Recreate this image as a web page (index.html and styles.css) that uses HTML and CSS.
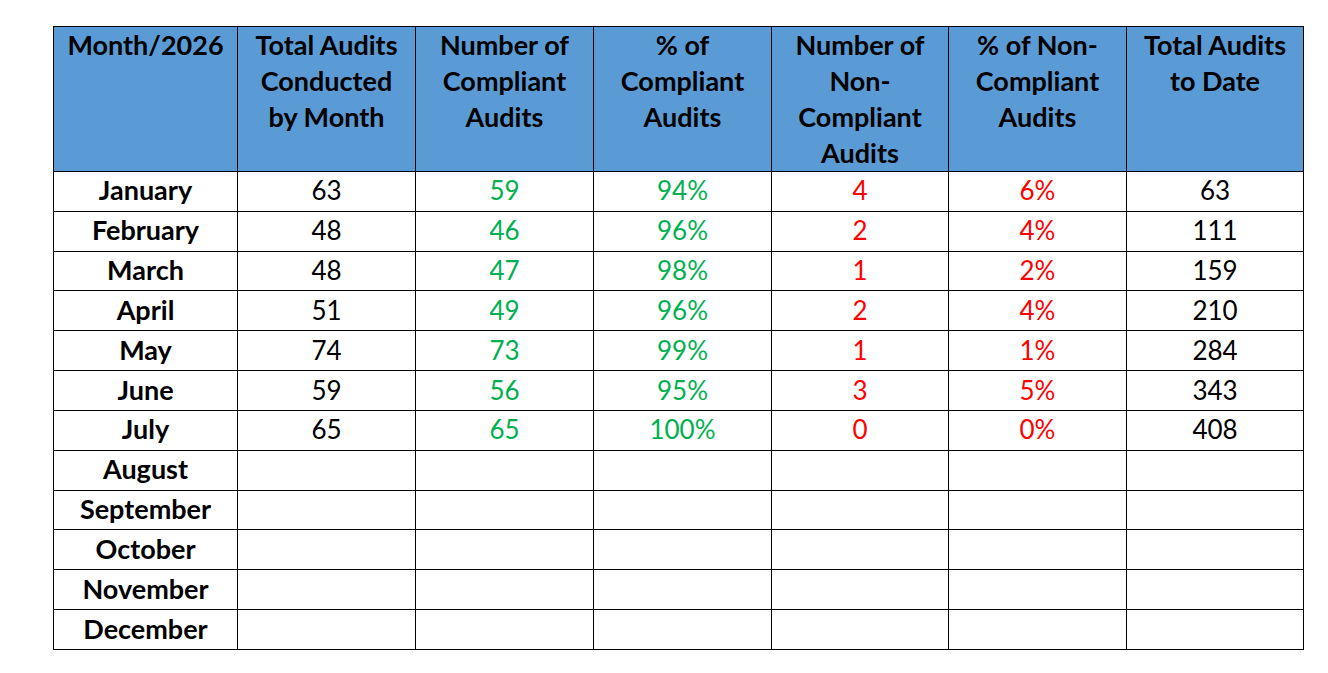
FILE: index.html
```html
<!DOCTYPE html>
<html lang="en">
<head>
<meta charset="utf-8">
<title>Audits 2026</title>
<link rel="stylesheet" href="styles.css">
</head>
<body>
<table class="audits">
  <colgroup>
    <col class="c-month"><col class="c-std"><col class="c-std"><col class="c-std"><col class="c-std5"><col class="c-std"><col class="c-std5">
  </colgroup>
  <thead>
    <tr>
      <th>Month/2026</th>
      <th>Total Audits Conducted by Month</th>
      <th>Number of Compliant Audits</th>
      <th>% of Compliant Audits</th>
      <th>Number of Non-Compliant Audits</th>
      <th>% of Non-Compliant Audits</th>
      <th>Total Audits to Date</th>
    </tr>
  </thead>
  <tbody>
    <tr><th>January</th><td>63</td><td class="ok">59</td><td class="ok">94%</td><td class="bad">4</td><td class="bad">6%</td><td>63</td></tr>
    <tr><th>February</th><td>48</td><td class="ok">46</td><td class="ok">96%</td><td class="bad">2</td><td class="bad">4%</td><td>111</td></tr>
    <tr><th>March</th><td>48</td><td class="ok">47</td><td class="ok">98%</td><td class="bad">1</td><td class="bad">2%</td><td>159</td></tr>
    <tr><th>April</th><td>51</td><td class="ok">49</td><td class="ok">96%</td><td class="bad">2</td><td class="bad">4%</td><td>210</td></tr>
    <tr><th>May</th><td>74</td><td class="ok">73</td><td class="ok">99%</td><td class="bad">1</td><td class="bad">1%</td><td>284</td></tr>
    <tr><th>June</th><td>59</td><td class="ok">56</td><td class="ok">95%</td><td class="bad">3</td><td class="bad">5%</td><td>343</td></tr>
    <tr><th>July</th><td>65</td><td class="ok">65</td><td class="ok">100%</td><td class="bad">0</td><td class="bad">0%</td><td>408</td></tr>
    <tr><th>August</th><td></td><td></td><td></td><td></td><td></td><td></td></tr>
    <tr><th>September</th><td></td><td></td><td></td><td></td><td></td><td></td></tr>
    <tr><th>October</th><td></td><td></td><td></td><td></td><td></td><td></td></tr>
    <tr><th>November</th><td></td><td></td><td></td><td></td><td></td><td></td></tr>
    <tr><th>December</th><td></td><td></td><td></td><td></td><td></td><td></td></tr>
  </tbody>
</table>
</body>
</html>
```

FILE: styles.css
```css
html, body {
  margin: 0;
  padding: 0;
  background: #ffffff;
}

body {
  font-family: "Lato", "Open Sans", "Liberation Sans", sans-serif;
  color: #000000;
}

.audits {
  margin: 26px 0 0 53px;
  border-collapse: collapse;
  table-layout: fixed;
  width: 1250px;
}

.c-month { width: 184px; }
.c-std { width: 178px; }
.c-std5 { width: 177px; }

.audits th,
.audits td {
  border: 1px solid #000000;
  text-align: center;
  padding: 0 8px;
}

.audits thead th {
  background: #5b9bd5;
  font-weight: 700;
  font-size: 27px;
  line-height: 36px;
  height: 144px;
  vertical-align: top;
  padding-top: 0;
  padding-bottom: 0;
}

.audits tbody th,
.audits tbody td {
  height: 36.84px;
  line-height: 30px;
  vertical-align: middle;
  font-size: 26px;
  padding-top: 0;
  padding-bottom: 2px;
}

.audits tbody th {
  font-weight: 700;
  font-size: 27px;
}

.audits tbody td {
  font-weight: 400;
}

.ok { color: #00b050; }
.bad { color: #ff0000; }
```
